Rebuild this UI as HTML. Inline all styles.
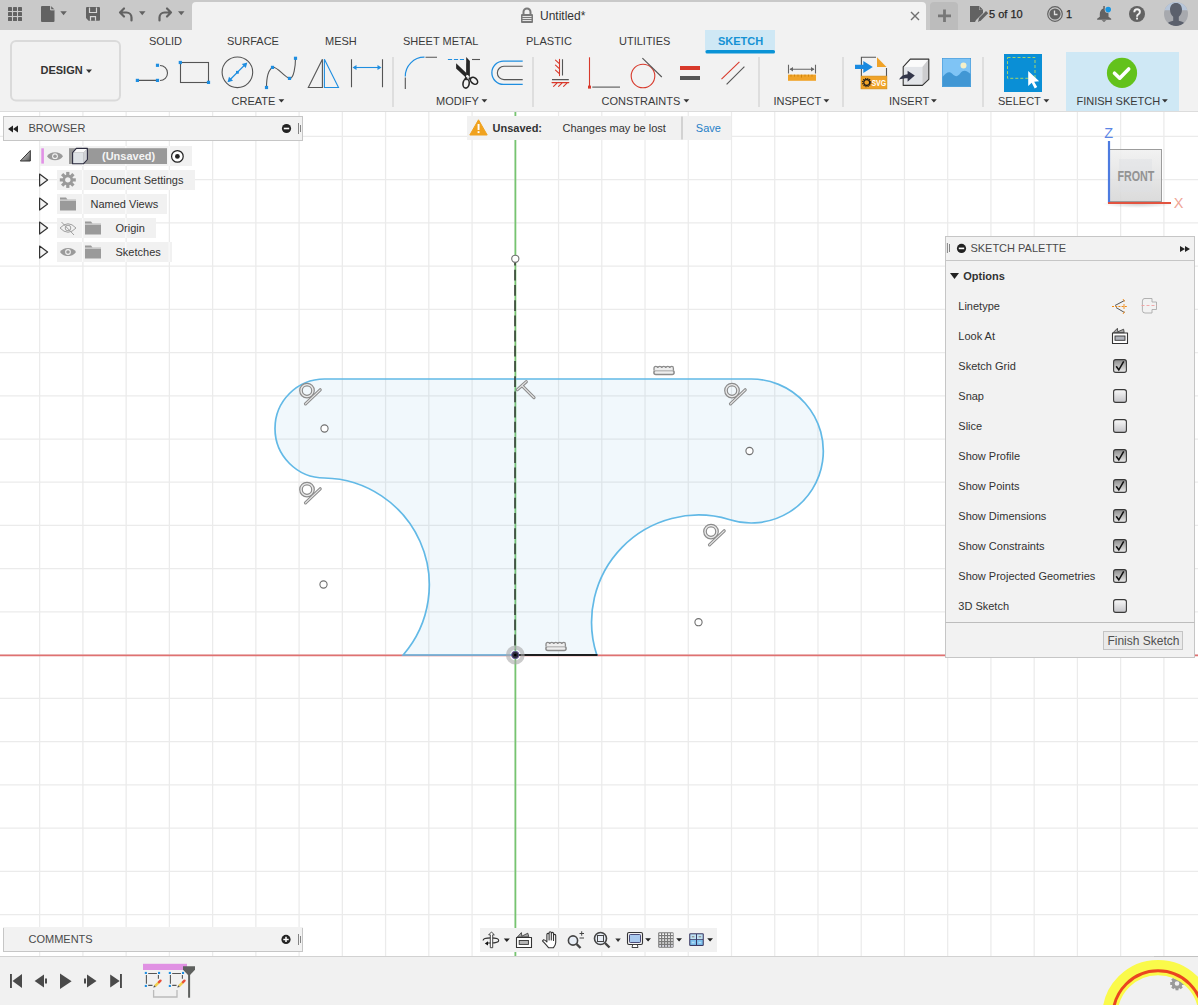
<!DOCTYPE html>
<html><head><meta charset="utf-8"><title>Fusion Sketch</title>
<style>html,body{margin:0;padding:0;width:1198px;height:1005px;overflow:hidden;background:#fff}svg{display:block}</style></head>
<body><svg width="1198" height="1005" viewBox="0 0 1198 1005">
<rect x="0" y="112" width="1198" height="844" fill="#ffffff"/>
<path d="M39.66 112V956 M82.90 112V956 M126.14 112V956 M169.38 112V956 M212.62 112V956 M255.86 112V956 M299.10 112V956 M342.34 112V956 M385.58 112V956 M428.82 112V956 M472.06 112V956 M515.30 112V956 M558.54 112V956 M601.78 112V956 M645.02 112V956 M688.26 112V956 M731.50 112V956 M774.74 112V956 M817.98 112V956 M861.22 112V956 M904.46 112V956 M947.70 112V956 M990.94 112V956 M1034.18 112V956 M1077.42 112V956 M1120.66 112V956 M1163.90 112V956 M0 136.32H1198 M0 179.56H1198 M0 222.80H1198 M0 266.04H1198 M0 309.28H1198 M0 352.52H1198 M0 395.76H1198 M0 439.00H1198 M0 482.24H1198 M0 525.48H1198 M0 568.72H1198 M0 611.96H1198 M0 655.20H1198 M0 698.44H1198 M0 741.68H1198 M0 784.92H1198 M0 828.16H1198 M0 871.40H1198 M0 914.64H1198" stroke="#ebebeb" stroke-width="1.25" fill="none"/>
<path d="M0 655.3H1198" stroke="#df7171" stroke-width="1.7"/>
<path d="M515.4 112V956" stroke="#76c470" stroke-width="1.8"/>
<path d="M324.5 379 H749.5 A72 72 0 1 1 729.08 519.46 A107 107 0 0 0 596.8 655 H403.2 A107 107 0 0 0 324.5 478 A49.5 49.5 0 0 1 324.5 379 Z" fill="#5ab2dc" fill-opacity="0.085" stroke="none"/>
<path d="M324.5 379 H749.5 A72 72 0 1 1 729.08 519.46 A107 107 0 0 0 596.8 655 H403.2 A107 107 0 0 0 324.5 478 A49.5 49.5 0 0 1 324.5 379 Z" fill="none" stroke="#62b9e6" stroke-width="1.7"/>
<path d="M515 655H597.5" stroke="#1e1e1e" stroke-width="2.2"/>
<path d="M515 262.5V650" stroke="#2a2a2a" stroke-opacity="0.72" stroke-width="1.9" stroke-dasharray="10.8 4.4" stroke-dashoffset="7.9"/>
<circle cx="515.3" cy="258.8" r="3.6" fill="#ffffff" stroke="#707070" stroke-width="1.1"/>
<circle cx="324.5" cy="428.5" r="3.6" fill="#ffffff" stroke="#707070" stroke-width="1.1"/>
<circle cx="323.5" cy="584.5" r="3.6" fill="#ffffff" stroke="#707070" stroke-width="1.1"/>
<circle cx="749.5" cy="451" r="3.6" fill="#ffffff" stroke="#707070" stroke-width="1.1"/>
<circle cx="698.5" cy="622.2" r="3.6" fill="#ffffff" stroke="#707070" stroke-width="1.1"/>
<circle cx="515.3" cy="655" r="7.4" fill="none" stroke="#a8a8a8" stroke-opacity="0.6" stroke-width="4"/>
<circle cx="515.3" cy="655" r="3.7" fill="#2b2b3a" stroke="#6d60a0" stroke-width="0.9"/>
<circle cx="515.3" cy="655" r="1.3" fill="#000"/>
<g transform="translate(299,383)" fill="none" stroke-linecap="round"><circle cx="8" cy="7.6" r="6" stroke="#8c8c8c" stroke-width="3.8"/><circle cx="8" cy="7.6" r="6" stroke="#e9e9e9" stroke-width="1.4"/><path d="M6.5 20.8L21.2 6.8" stroke="#8c8c8c" stroke-width="3.2"/><path d="M6.5 20.8L21.2 6.8" stroke="#e9e9e9" stroke-width="1.1"/></g>
<g transform="translate(299,482)" fill="none" stroke-linecap="round"><circle cx="8" cy="7.6" r="6" stroke="#8c8c8c" stroke-width="3.8"/><circle cx="8" cy="7.6" r="6" stroke="#e9e9e9" stroke-width="1.4"/><path d="M6.5 20.8L21.2 6.8" stroke="#8c8c8c" stroke-width="3.2"/><path d="M6.5 20.8L21.2 6.8" stroke="#e9e9e9" stroke-width="1.1"/></g>
<g transform="translate(724,383)" fill="none" stroke-linecap="round"><circle cx="8" cy="7.6" r="6" stroke="#8c8c8c" stroke-width="3.8"/><circle cx="8" cy="7.6" r="6" stroke="#e9e9e9" stroke-width="1.4"/><path d="M6.5 20.8L21.2 6.8" stroke="#8c8c8c" stroke-width="3.2"/><path d="M6.5 20.8L21.2 6.8" stroke="#e9e9e9" stroke-width="1.1"/></g>
<g transform="translate(703,524)" fill="none" stroke-linecap="round"><circle cx="8" cy="7.6" r="6" stroke="#8c8c8c" stroke-width="3.8"/><circle cx="8" cy="7.6" r="6" stroke="#e9e9e9" stroke-width="1.4"/><path d="M6.5 20.8L21.2 6.8" stroke="#8c8c8c" stroke-width="3.2"/><path d="M6.5 20.8L21.2 6.8" stroke="#e9e9e9" stroke-width="1.1"/></g>
<g fill="none" stroke-linecap="round"><path d="M517.4 389.6L526.3 381.7M522 385.6L534 397.6" stroke="#8c8c8c" stroke-width="3.2"/><path d="M517.4 389.6L526.3 381.7M522 385.6L534 397.6" stroke="#e9e9e9" stroke-width="1.1"/></g>
<g transform="translate(653,365)" fill="none"><rect x="0.9" y="5.4" width="20.2" height="4.2" rx="2" stroke="#8c8c8c" stroke-width="1.5" fill="#eeeeee"/><path d="M1 5.4V3.2q0-1.8 1.8-1.8q1.8 0 2 1.6q0.2-1.6 2-1.6q1.8 0 2 1.6q0.2-1.6 2-1.6q1.8 0 2 1.6q0.2-1.6 2-1.6q1.8 0 2 1.6q0.2-1.6 2-1.6q1.6 0 1.6 1.8V5.4" stroke="#8c8c8c" stroke-width="1.3" fill="#eeeeee"/></g>
<g transform="translate(545,641)" fill="none"><rect x="0.9" y="5.4" width="20.2" height="4.2" rx="2" stroke="#8c8c8c" stroke-width="1.5" fill="#eeeeee"/><path d="M1 5.4V3.2q0-1.8 1.8-1.8q1.8 0 2 1.6q0.2-1.6 2-1.6q1.8 0 2 1.6q0.2-1.6 2-1.6q1.8 0 2 1.6q0.2-1.6 2-1.6q1.8 0 2 1.6q0.2-1.6 2-1.6q1.6 0 1.6 1.8V5.4" stroke="#8c8c8c" stroke-width="1.3" fill="#eeeeee"/></g>
<defs><linearGradient id="cubeg" x1="0" y1="0" x2="0" y2="1"><stop offset="0" stop-color="#f0f0f0"/><stop offset="1" stop-color="#d6d6d6"/></linearGradient><radialGradient id="shad" cx="0.5" cy="0.5" r="0.5"><stop offset="0" stop-color="#000" stop-opacity="0.18"/><stop offset="1" stop-color="#000" stop-opacity="0"/></radialGradient></defs>
<ellipse cx="1138" cy="204" rx="36" ry="4" fill="url(#shad)"/>
<rect x="1109.5" y="149.5" width="52" height="52" fill="url(#cubeg)" fill-opacity="0.88" stroke="#9c9c9c" stroke-width="1"/><rect x="1119" y="159" width="33" height="33" fill="#dde0e4" fill-opacity="0.45"/>
<text x="1117.4" y="181" font-family="Liberation Sans, sans-serif" font-size="14.5" font-weight="bold" fill="#939393" textLength="37" lengthAdjust="spacingAndGlyphs">FRONT</text>
<path d="M1109 141V203" stroke="#4d7be0" stroke-width="2.2"/>
<path d="M1108 203H1171" stroke="#e2533f" stroke-width="2.2"/>
<text x="1108.6" y="138" text-anchor="middle" font-family="Liberation Sans, sans-serif" font-size="14.5" fill="#5b86e6">Z</text>
<text x="1178.5" y="208" text-anchor="middle" font-family="Liberation Sans, sans-serif" font-size="14.5" fill="#efa595">X</text>
<rect x="0" y="0" width="1198" height="30" fill="#c9c9c9"/>
<path d="M192 30V6a4 4 0 0 1 4-4H922a4 4 0 0 1 4 4V30Z" fill="#f2f2f2"/>
<path d="M930 30V6a4 4 0 0 1 4-4H954a4 4 0 0 1 4 4V30Z" fill="#bcbcbc"/>
<rect x="8" y="7" width="4" height="4" rx="0.6" fill="#626262"/>
<rect x="8" y="12" width="4" height="4" rx="0.6" fill="#626262"/>
<rect x="8" y="17" width="4" height="4" rx="0.6" fill="#626262"/>
<rect x="13" y="7" width="4" height="4" rx="0.6" fill="#626262"/>
<rect x="13" y="12" width="4" height="4" rx="0.6" fill="#626262"/>
<rect x="13" y="17" width="4" height="4" rx="0.6" fill="#626262"/>
<rect x="18" y="7" width="4" height="4" rx="0.6" fill="#626262"/>
<rect x="18" y="12" width="4" height="4" rx="0.6" fill="#626262"/>
<rect x="18" y="17" width="4" height="4" rx="0.6" fill="#626262"/>
<path d="M41 7a1 1 0 0 1 1-1h8.5l4 4V21a1 1 0 0 1-1 1H42a1 1 0 0 1-1-1Z" fill="#626262"/><path d="M50.5 6v4h4" fill="#c9c9c9" stroke="#c9c9c9" stroke-width="0.8"/><path d="M51.2 6.3l3 3h-3z" fill="#626262"/>
<path d="M60.3 11.3h6.5l-3.25 4z" fill="#626262"/>
<path d="M86 8a1 1 0 0 1 1-1H99a1 1 0 0 1 1 1V19.8a1 1 0 0 1-1 1H88.6L86 18Z" fill="#626262"/><path d="M89.5 7.6V12.5H96.5V7.6M90.5 20.8V16.6H95.5V20.8" fill="none" stroke="#d6d6d6" stroke-width="1.2"/>
<path d="M131.5 20.5v-3a5 5 0 0 0-5-5h-6.5M124 8.5l-4 4 4 4" fill="none" stroke="#626262" stroke-width="2.2" stroke-linecap="round" stroke-linejoin="round"/>
<path d="M139 11.3h6.5l-3.25 4z" fill="#626262"/>
<path d="M159.5 20.5v-3a5 5 0 0 1 5-5h6.5M167 8.5l4 4-4 4" fill="none" stroke="#626262" stroke-width="2.2" stroke-linecap="round" stroke-linejoin="round"/>
<path d="M178 11.3h6.5l-3.25 4z" fill="#626262"/>
<path d="M523.5 14v-2a3.5 3.5 0 0 1 7 0v2" fill="none" stroke="#7a7a7a" stroke-width="2"/><rect x="521" y="14" width="12" height="9" rx="1" fill="#7a7a7a"/><path d="M522.5 16.5h9M522.5 18.5h9M522.5 20.5h9" stroke="#f2f2f2" stroke-width="0.9"/>
<text x="540" y="20" font-family="Liberation Sans, sans-serif" font-size="12" fill="#333">Untitled*</text>
<path d="M911 12l8 8M919 12l-8 8" stroke="#707070" stroke-width="1.4"/>
<path d="M944.5 9.5v12.5M938 15.8h13" stroke="#777" stroke-width="2.8"/>
<path d="M970 6h9l4 4v3l-7 7-1 2h-5Z" fill="#626262"/><path d="M978 22l1-4 7-7 2.2 2.2-7 7z" fill="#626262"/><path d="M979 6v4h4" fill="#c9c9c9"/><path d="M979.5 6.2l3.5 3.6h-3.5z" fill="#626262"/>
<text x="989" y="17.8" font-family="Liberation Sans, sans-serif" font-size="11" fill="#262626" stroke="#262626" stroke-width="0.25">5 of 10</text>
<circle cx="1055" cy="14" r="7.3" fill="none" stroke="#626262" stroke-width="1.2"/><circle cx="1055" cy="14" r="5.6" fill="#626262"/><path d="M1054.5 10.5v4h3" fill="none" stroke="#e0e0e0" stroke-width="1.3"/>
<text x="1066" y="17.8" font-family="Liberation Sans, sans-serif" font-size="11" fill="#262626" stroke="#262626" stroke-width="0.25">1</text>
<path d="M1103.3 6h1.5v2.4c2.4 0.8 3.7 3 3.7 5.6v2.8l2.7 2v0.9H1097.1v-0.9l2.7-2V14c0-2.6 1.3-4.8 3.5-5.6z" fill="#626262"/><path d="M1101.6 20.3h4.8l-2.4 1.8z" fill="#626262"/><circle cx="1108.2" cy="9.6" r="3.5" fill="#cccccc"/><circle cx="1108.2" cy="9.6" r="2.8" fill="#1895e0"/>
<circle cx="1137" cy="14" r="8" fill="#626262"/><path d="M1134.3 12.2c0-1.9 1.2-3 2.8-3s2.8 1.1 2.8 2.7c0 1.6-1.3 2.2-2.1 2.8-0.5 0.4-0.7 0.8-0.7 1.5v0.6" fill="none" stroke="#f0f0f0" stroke-width="1.9"/><rect x="1136.1" y="17.6" width="1.9" height="1.9" fill="#f0f0f0"/>
<defs><clipPath id="av"><circle cx="1176" cy="14" r="12"/></clipPath></defs><g clip-path="url(#av)"><rect x="1164" y="2" width="24" height="24" fill="#a7a9ae"/><rect x="1164" y="2" width="24" height="8.2" fill="#b7c6da"/><path d="M1176 3c3.6 0 6 2.6 6 6.6 0 3.6-1.6 6-3.2 7.2V20.8c2.4 0.6 4.6 1.4 5.8 2.6L1176 27l-8.6-3.6c1.2-1.2 3.4-2 5.8-2.6V16.8c-1.6-1.2-3.2-3.6-3.2-7.2 0-4 2.4-6.6 6-6.6z" fill="#5b606c"/></g>
<rect x="0" y="30" width="1198" height="81" fill="#f2f2f2"/>
<rect x="0" y="111" width="1198" height="1" fill="#dcdcdc"/>
<rect x="11" y="41" width="109" height="59.5" rx="5" fill="none" stroke="#dadada" stroke-width="2"/>
<text x="40.5" y="74.3" font-family="Liberation Sans, sans-serif" font-size="11" font-weight="bold" fill="#333">DESIGN</text>
<path d="M86 69.5h6l-3.0 3.5z" fill="#333"/>
<text x="149" y="45.2" font-family="Liberation Sans, sans-serif" font-size="11" fill="#3a3a3a">SOLID</text>
<text x="227" y="45.2" font-family="Liberation Sans, sans-serif" font-size="11" fill="#3a3a3a">SURFACE</text>
<text x="325" y="45.2" font-family="Liberation Sans, sans-serif" font-size="11" fill="#3a3a3a">MESH</text>
<text x="403" y="45.2" font-family="Liberation Sans, sans-serif" font-size="11" fill="#3a3a3a">SHEET METAL</text>
<text x="526" y="45.2" font-family="Liberation Sans, sans-serif" font-size="11" fill="#3a3a3a">PLASTIC</text>
<text x="619" y="45.2" font-family="Liberation Sans, sans-serif" font-size="11" fill="#3a3a3a">UTILITIES</text>
<rect x="705" y="30" width="70" height="22" fill="#cfe8f5"/><rect x="705.5" y="50" width="69.5" height="3.5" rx="1.6" fill="#0a93d6"/>
<text x="718" y="45.2" font-family="Liberation Sans, sans-serif" font-size="11" font-weight="bold" fill="#1492d4">SKETCH</text>
<rect x="1066" y="52" width="113" height="59" fill="#cfe8f5"/>
<text x="231.5" y="105" font-family="Liberation Sans, sans-serif" font-size="11" fill="#3a3a3a">CREATE</text>
<path d="M278.5 99.2h5.8l-2.9 3.4z" fill="#333"/>
<text x="436" y="105" font-family="Liberation Sans, sans-serif" font-size="11" fill="#3a3a3a">MODIFY</text>
<path d="M481.5 99.2h5.8l-2.9 3.4z" fill="#333"/>
<text x="601.5" y="105" font-family="Liberation Sans, sans-serif" font-size="11" fill="#3a3a3a">CONSTRAINTS</text>
<path d="M683.5 99.2h5.8l-2.9 3.4z" fill="#333"/>
<text x="773.5" y="105" font-family="Liberation Sans, sans-serif" font-size="11" fill="#3a3a3a">INSPECT</text>
<path d="M823.5 99.2h5.8l-2.9 3.4z" fill="#333"/>
<text x="889" y="105" font-family="Liberation Sans, sans-serif" font-size="11" fill="#3a3a3a">INSERT</text>
<path d="M931 99.2h5.8l-2.9 3.4z" fill="#333"/>
<text x="998" y="105" font-family="Liberation Sans, sans-serif" font-size="11" fill="#3a3a3a">SELECT</text>
<path d="M1043.5 99.2h5.8l-2.9 3.4z" fill="#333"/>
<text x="1076.5" y="105" font-family="Liberation Sans, sans-serif" font-size="11" fill="#3a3a3a">FINISH SKETCH</text>
<path d="M1162 99.2h5.8l-2.9 3.4z" fill="#333"/>
<rect x="392" y="57" width="2" height="50" fill="#dedede"/>
<rect x="532" y="57" width="2" height="50" fill="#dedede"/>
<rect x="758" y="57" width="2" height="50" fill="#dedede"/>
<rect x="842" y="57" width="2" height="50" fill="#dedede"/>
<rect x="982" y="57" width="2" height="50" fill="#dedede"/>
<path d="M138 80.4H157.5M160 65.5a7.5 7.5 0 0 1 0 15" fill="none" stroke="#555" stroke-width="1.1"/><rect x="135.8" y="78.80000000000001" width="3.2" height="3.2" fill="#1f8ee0"/><rect x="155.9" y="78.80000000000001" width="3.2" height="3.2" fill="#1f8ee0"/><rect x="155.9" y="63.699999999999996" width="3.2" height="3.2" fill="#1f8ee0"/>
<rect x="180.5" y="62.5" width="28" height="20" fill="none" stroke="#555" stroke-width="1.1"/><rect x="178.70000000000002" y="60.9" width="3.2" height="3.2" fill="#1f8ee0"/><rect x="206.9" y="80.80000000000001" width="3.2" height="3.2" fill="#1f8ee0"/>
<circle cx="237.4" cy="72.3" r="15.3" fill="none" stroke="#555" stroke-width="1.1"/><path d="M228.5 81.2L246.3 63.4" stroke="#1f8ee0" stroke-width="1.3"/><path d="M227.5 82.2l1.5-5.5 4 4z M247.3 62.4l-5.5 1.5 4 4z" fill="#1f8ee0"/><rect x="236.0" y="70.89999999999999" width="2.8" height="2.8" fill="#1f8ee0"/>
<path d="M266.5 87.5C266.5 78 268 70 272.5 67.4C277 66 284 77 289.5 78.4C294 79 295.5 65 295.5 58.3" fill="none" stroke="#555" stroke-width="1.1"/><rect x="264.9" y="85.9" width="3.2" height="3.2" fill="#1f8ee0"/><rect x="270.9" y="65.80000000000001" width="3.2" height="3.2" fill="#1f8ee0"/><rect x="287.9" y="76.80000000000001" width="3.2" height="3.2" fill="#1f8ee0"/><rect x="293.9" y="56.699999999999996" width="3.2" height="3.2" fill="#1f8ee0"/>
<path d="M308.3 87.5L322.4 59.3V87.5Z" fill="none" stroke="#555" stroke-width="1.1"/><path d="M324.4 87.5V59.3L338.5 87.5Z" fill="none" stroke="#1f8ee0" stroke-width="1.1"/>
<path d="M351.5 59.3V87.3M382.5 59.3V87.3" stroke="#555" stroke-width="1.1"/><path d="M354 67.5H380" stroke="#1f8ee0" stroke-width="1.1"/><path d="M352.5 67.5l4-2.6v5.2z M381.5 67.5l-4-2.6v5.2z" fill="#1f8ee0"/>
<path d="M405.3 76.5A19 19 0 0 1 424.5 57.2" fill="none" stroke="#1f8ee0" stroke-width="1.2"/><path d="M425.5 57.2H437M405.3 77.5V89" stroke="#555" stroke-width="1.1"/>
<path d="M447.9 59.5H464" stroke="#1f8ee0" stroke-width="1.1" stroke-dasharray="4.2 1.8"/><path d="M472 59.5H480" stroke="#555" stroke-width="1.1"/><path d="M466.2 57L469.9 61L469.9 77L466.1 74.5Z" fill="#262626"/><path d="M456.1 63.3L466.6 73.2L466.6 78.2L456.1 68.6Z" fill="#262626"/><path d="M466.5 77L465.2 80M469.2 77.5L470.5 79.5" stroke="#262626" stroke-width="2.2"/><ellipse cx="466.1" cy="83.5" rx="3.1" ry="4.6" transform="rotate(8 466.1 83.5)" fill="none" stroke="#262626" stroke-width="1.6"/><ellipse cx="474" cy="80.8" rx="4.1" ry="2.9" transform="rotate(42 474 80.8)" fill="none" stroke="#262626" stroke-width="1.6"/><circle cx="467.4" cy="76.3" r="1.2" fill="#f2f2f2"/>
<path d="M522.7 61.1H503.5a11.65 11.65 0 0 0 0 23.3H522.7" fill="none" stroke="#1f8ee0" stroke-width="1.3"/><path d="M522.7 66.3H504a6.65 6.65 0 0 0 0 13.3H522.7" fill="none" stroke="#555" stroke-width="1.1"/>
<path d="M562.5 59.2V75.6M552 79.6H568.8" stroke="#555" stroke-width="1.1"/><path d="M559.5 59.2V75.6M555.5 60.2l3.8 3.5M555.5 65.2l3.8 3.5M555.5 70.2l3.8 3.5M552 82.6H568.8M557.2 82.8l-3.6 3.6M562.2 82.8l-3.6 3.6M567.2 82.8l-3.6 3.6" stroke="#d8392b" stroke-width="1.1" stroke-linecap="round"/>
<path d="M589.5 57.3V86" stroke="#d8392b" stroke-width="1.1"/><rect x="588" y="85.6" width="3" height="3" fill="#d8392b"/><path d="M592.3 87.1H620" stroke="#555" stroke-width="1.1"/>
<circle cx="643" cy="76" r="11.8" fill="none" stroke="#d8392b" stroke-width="1.1"/><path d="M642.4 58.2L661.8 77" stroke="#555" stroke-width="1.1"/>
<rect x="680" y="66" width="20" height="4" fill="#d8392b"/><rect x="680" y="76" width="20" height="4" fill="#555"/>
<path d="M721.5 79.2L739.4 61.8" stroke="#d8392b" stroke-width="1.1"/><path d="M726.6 84.3L744.4 66.6" stroke="#555" stroke-width="1.1"/>
<path d="M788.5 64.7V73.6M815.5 64.7V73.6M790 69.3H814" stroke="#666" stroke-width="1.1"/><path d="M789.5 69.3l3.5-2.2v4.4z M814.5 69.3l-3.5-2.2v4.4z" fill="#666"/><rect x="788" y="74.6" width="28" height="6.2" fill="#f0a328"/><path d="M791 74.6v2M794.5 74.6v2M798 74.6v2M801.5 74.6v3M805 74.6v2M808.5 74.6v2M812 74.6v2" stroke="#c07800" stroke-width="0.7"/>
<path d="M861.4 76.1V57.3H876M886.5 68V76.1" fill="none" stroke="#555" stroke-width="1.1"/><path d="M877 57.3V66.9H886.5Z" fill="#f0a328"/><rect x="861" y="76.1" width="25.9" height="12.8" fill="#f0a328" stroke="#d08a10" stroke-width="0.6"/><text x="871.4" y="85.8" font-family="Liberation Sans, sans-serif" font-size="9.2" font-weight="bold" fill="#fff" textLength="14.8" lengthAdjust="spacingAndGlyphs">SVG</text><circle cx="866.7" cy="82.5" r="2.9" fill="#f0a328" stroke="#1a1a1a" stroke-width="1.1"/><circle cx="866.7" cy="82.5" r="4" fill="none" stroke="#1a1a1a" stroke-width="1.3" stroke-dasharray="1.1 1"/><path d="M855 64.8h8.3v-3.9l9.5 6-9.5 6v-3.9H855z" fill="#1a8ae0"/>
<path d="M903.2 66.9L910.3 59.1H928.8L922.4 66.9Z" fill="#fbfbfb"/><path d="M903.2 66.9H922.4V85.4H903.2Z" fill="#e3e5e9"/><path d="M922.4 66.9L928.8 59.1V79.3L922.4 85.4Z" fill="#cdcdcf"/><path d="M903.2 85.4V66.9L910.3 59.1H928.8V79.3L922.4 85.4Z" fill="none" stroke="#333" stroke-width="1.1" stroke-linejoin="round"/><path d="M899 79.5c2-3.5 5-5 8.6-5.2V70.8l7.2 4.6-7.2 6.4v-3.6c-3.4 0-6 0.6-8.6 1.3z" fill="#33364a"/>
<rect x="942" y="58" width="29" height="29" fill="#3d90d0"/><rect x="942.5" y="58.5" width="28" height="28" fill="#7fc4f5"/><path d="M942.5 77c4-5 7-6 10-3s5 3 8-1 7-2 10 1v12.5h-28z" fill="#4197d4"/><circle cx="963.5" cy="65.5" r="3" fill="#f4efc8"/>
<rect x="1004" y="54" width="38" height="38" fill="#0a8fd6"/><rect x="1007.5" y="57.5" width="27.5" height="20.8" fill="none" stroke="#a4d468" stroke-width="1" stroke-dasharray="3 2"/><path d="M1028.2 71.1V86l3.5-3.2 3 5.6 2.5-1.3-3-5.4 5-0.5z" fill="#fff"/>
<circle cx="1122" cy="72.9" r="15.1" fill="#63c21b"/><path d="M1114.5 73.2l5.2 5 9-9.2" fill="none" stroke="#fff" stroke-width="3.6" stroke-linecap="round" stroke-linejoin="round"/>
<rect x="3.5" y="116.5" width="299" height="24" fill="#f2f2f2" stroke="#c6c6c6" stroke-width="1"/>
<path d="M8 129l5-3.5v7z M13 129l5-3.5v7z" fill="#222"/>
<text x="28.5" y="132" font-family="Liberation Sans, sans-serif" font-size="11" fill="#4a4a4a">BROWSER</text>
<circle cx="286.5" cy="128.5" r="4.6" fill="#222"/><rect x="283.8" y="127.7" width="5.4" height="1.6" fill="#fff"/>
<path d="M298.5 123V134M300.5 125V132" stroke="#777" stroke-width="0.9"/>
<rect x="40" y="146" width="152" height="20" fill="#f1f1f1"/>
<rect x="57" y="170" width="138" height="20" fill="#f1f1f1"/>
<rect x="57" y="194" width="110" height="20" fill="#f1f1f1"/>
<rect x="57" y="218" width="99" height="20" fill="#f1f1f1"/>
<rect x="57" y="242" width="115" height="20" fill="#f1f1f1"/>
<path d="M82.6 146V166M125.8 146V166M169.1 146V166M82.6 170V190M125.8 170V190M169.1 170V190M82.6 194V214M125.8 194V214M82.6 218V238M125.8 218V238M82.6 242V262M125.8 242V262M169.1 242V262" stroke="#fafafa" stroke-width="1.25"/>
<defs><linearGradient id="tri" x1="0" y1="0" x2="1" y2="1"><stop offset="0" stop-color="#eee"/><stop offset="1" stop-color="#555"/></linearGradient></defs>
<path d="M20.3 161L30.3 150.5V161Z" fill="url(#tri)" stroke="#333" stroke-width="1"/>
<rect x="41.3" y="148.3" width="2.6" height="15.3" fill="#e191e6"/>
<path d="M47 156.2C50 150.79999999999998 60 150.79999999999998 63 156.2C60 161.6 50 161.6 47 156.2Z" fill="#9a9a9a"/><circle cx="55" cy="156.2" r="2.9" fill="#f0f0f0"/><circle cx="55" cy="156.2" r="1.8" fill="#9a9a9a"/>
<rect x="69" y="148.2" width="98" height="15.8" fill="#999"/>
<path d="M72.6 152.6L76.4 148.4H87.4L83.6 152.6Z" fill="#fafafa"/><path d="M72.6 152.6H83.6V163.7H72.6Z" fill="#dfe3e7"/><path d="M83.6 152.6L87.4 148.4V159.5L83.6 163.7Z" fill="#d0d2d6"/><path d="M72.6 152.6L76.4 148.4H87.4V159.5L83.6 163.7H72.6Z" fill="none" stroke="#2d2d40" stroke-width="1.1" stroke-linejoin="round"/>
<text x="102" y="160.3" font-family="Liberation Sans, sans-serif" font-size="11" font-weight="bold" fill="#f4f4f4">(Unsaved)</text>
<circle cx="177.4" cy="156.4" r="5.8" fill="#fff" stroke="#222" stroke-width="1.2"/><circle cx="177.4" cy="156.4" r="2.4" fill="#222"/>
<path d="M39.6 174L47.6 180L39.6 186Z" fill="#f4f4f4" stroke="#333" stroke-width="1.2" stroke-linejoin="round"/>
<g transform="translate(67.8,179.9)"><circle r="4" fill="none" stroke="#9a9a9a" stroke-width="2.6"/><rect x="-1.6" y="-8" width="3.2" height="4.2" fill="#9a9a9a" transform="rotate(0)"/><rect x="-1.6" y="-8" width="3.2" height="4.2" fill="#9a9a9a" transform="rotate(45)"/><rect x="-1.6" y="-8" width="3.2" height="4.2" fill="#9a9a9a" transform="rotate(90)"/><rect x="-1.6" y="-8" width="3.2" height="4.2" fill="#9a9a9a" transform="rotate(135)"/><rect x="-1.6" y="-8" width="3.2" height="4.2" fill="#9a9a9a" transform="rotate(180)"/><rect x="-1.6" y="-8" width="3.2" height="4.2" fill="#9a9a9a" transform="rotate(225)"/><rect x="-1.6" y="-8" width="3.2" height="4.2" fill="#9a9a9a" transform="rotate(270)"/><rect x="-1.6" y="-8" width="3.2" height="4.2" fill="#9a9a9a" transform="rotate(315)"/></g>
<text x="90.5" y="184" font-family="Liberation Sans, sans-serif" font-size="11" fill="#333">Document Settings</text>
<path d="M39.6 198L47.6 204L39.6 210Z" fill="#f4f4f4" stroke="#333" stroke-width="1.2" stroke-linejoin="round"/>
<path d="M60 197.5h6l1.5 2H76v11H60z" fill="#9a9a9a"/><path d="M60 200.1H76" stroke="#f0f0f0" stroke-width="0.9"/>
<text x="90.5" y="208" font-family="Liberation Sans, sans-serif" font-size="11" fill="#333">Named Views</text>
<path d="M39.6 222L47.6 228L39.6 234Z" fill="#f4f4f4" stroke="#333" stroke-width="1.2" stroke-linejoin="round"/>
<path d="M60 228q8-8.5 16 0q-8 8.5-16 0z" fill="none" stroke="#a0a0a0" stroke-width="1"/><circle cx="68" cy="228" r="2.8" fill="none" stroke="#a0a0a0" stroke-width="1"/><path d="M61.5 222L74 235" stroke="#a0a0a0" stroke-width="1"/>
<path d="M85 221.5h6l1.5 2H101v11H85z" fill="#9a9a9a"/><path d="M85 224.1H101" stroke="#f0f0f0" stroke-width="0.9"/>
<text x="115.5" y="232" font-family="Liberation Sans, sans-serif" font-size="11" fill="#333">Origin</text>
<path d="M39.6 246L47.6 252L39.6 258Z" fill="#f4f4f4" stroke="#333" stroke-width="1.2" stroke-linejoin="round"/>
<path d="M60 252C63 246.6 73 246.6 76 252C73 257.4 63 257.4 60 252Z" fill="#9a9a9a"/><circle cx="68" cy="252" r="2.9" fill="#f0f0f0"/><circle cx="68" cy="252" r="1.8" fill="#9a9a9a"/>
<path d="M85 245.5h6l1.5 2H101v11H85z" fill="#9a9a9a"/><path d="M85 248.1H101" stroke="#f0f0f0" stroke-width="0.9"/>
<text x="115.5" y="256" font-family="Liberation Sans, sans-serif" font-size="11" fill="#333">Sketches</text>
<rect x="467" y="116" width="264" height="24" fill="#f1f1f1"/>
<path d="M478.5 119.8L487.2 135H469.8Z" fill="#f0a21e" stroke="#f0a21e" stroke-width="1" stroke-linejoin="round"/><rect x="477.6" y="124" width="1.9" height="6" fill="#fff"/><rect x="477.6" y="131.2" width="1.9" height="1.9" fill="#fff"/>
<text x="492.5" y="132" font-family="Liberation Sans, sans-serif" font-size="11" font-weight="bold" fill="#333">Unsaved:</text>
<text x="562.5" y="132" font-family="Liberation Sans, sans-serif" font-size="11" fill="#333">Changes may be lost</text>
<rect x="681" y="116.5" width="2" height="23" fill="#d2d2d2"/>
<text x="695.8" y="132" font-family="Liberation Sans, sans-serif" font-size="11" fill="#1f80c8">Save</text>
<rect x="945.5" y="236.5" width="249" height="421" fill="#f2f2f2" stroke="#c6c6c6" stroke-width="1"/>
<path d="M945.5 260.5H1194.5" stroke="#c6c6c6" stroke-width="1"/>
<path d="M947.4 243V253M949.5 244V252" stroke="#777" stroke-width="0.9"/>
<circle cx="961.5" cy="248.4" r="4.6" fill="#222"/><rect x="958.8" y="247.6" width="5.4" height="1.6" fill="#fff"/>
<text x="970.4" y="252" font-family="Liberation Sans, sans-serif" font-size="11" fill="#4a4a4a">SKETCH PALETTE</text>
<path d="M1180 246l5 3-5 3z M1185 246l5 3-5 3z" fill="#222"/>
<path d="M950 273h9l-4.5 6z" fill="#222"/>
<text x="963.3" y="280" font-family="Liberation Sans, sans-serif" font-size="11" font-weight="bold" fill="#333">Options</text>
<defs><linearGradient id="cb" x1="0" y1="0" x2="0" y2="1"><stop offset="0" stop-color="#fafafa"/><stop offset="1" stop-color="#c4c4c8"/></linearGradient><linearGradient id="cbc" x1="0" y1="0" x2="0" y2="1"><stop offset="0" stop-color="#8a8a8a"/><stop offset="1" stop-color="#ececec"/></linearGradient></defs>
<text x="958.3" y="310" font-family="Liberation Sans, sans-serif" font-size="11" fill="#333">Linetype</text>
<text x="958.3" y="340" font-family="Liberation Sans, sans-serif" font-size="11" fill="#333">Look At</text>
<text x="958.3" y="370" font-family="Liberation Sans, sans-serif" font-size="11" fill="#333">Sketch Grid</text>
<rect x="1113.6" y="359.6" width="12.8" height="12.8" rx="2.2" fill="url(#cbc)" stroke="#3a3a3a" stroke-width="1.1"/>
<path d="M1116.2 366.2l2.6 3.6 4.9-8.4" fill="none" stroke="#111" stroke-width="1.5"/>
<text x="958.3" y="400" font-family="Liberation Sans, sans-serif" font-size="11" fill="#333">Snap</text>
<rect x="1113.6" y="389.6" width="12.8" height="12.8" rx="2.2" fill="url(#cb)" stroke="#3a3a3a" stroke-width="1.1"/>
<text x="958.3" y="430" font-family="Liberation Sans, sans-serif" font-size="11" fill="#333">Slice</text>
<rect x="1113.6" y="419.6" width="12.8" height="12.8" rx="2.2" fill="url(#cb)" stroke="#3a3a3a" stroke-width="1.1"/>
<text x="958.3" y="460" font-family="Liberation Sans, sans-serif" font-size="11" fill="#333">Show Profile</text>
<rect x="1113.6" y="449.6" width="12.8" height="12.8" rx="2.2" fill="url(#cbc)" stroke="#3a3a3a" stroke-width="1.1"/>
<path d="M1116.2 456.2l2.6 3.6 4.9-8.4" fill="none" stroke="#111" stroke-width="1.5"/>
<text x="958.3" y="490" font-family="Liberation Sans, sans-serif" font-size="11" fill="#333">Show Points</text>
<rect x="1113.6" y="479.6" width="12.8" height="12.8" rx="2.2" fill="url(#cbc)" stroke="#3a3a3a" stroke-width="1.1"/>
<path d="M1116.2 486.2l2.6 3.6 4.9-8.4" fill="none" stroke="#111" stroke-width="1.5"/>
<text x="958.3" y="520" font-family="Liberation Sans, sans-serif" font-size="11" fill="#333">Show Dimensions</text>
<rect x="1113.6" y="509.6" width="12.8" height="12.8" rx="2.2" fill="url(#cbc)" stroke="#3a3a3a" stroke-width="1.1"/>
<path d="M1116.2 516.2l2.6 3.6 4.9-8.4" fill="none" stroke="#111" stroke-width="1.5"/>
<text x="958.3" y="550" font-family="Liberation Sans, sans-serif" font-size="11" fill="#333">Show Constraints</text>
<rect x="1113.6" y="539.6" width="12.8" height="12.8" rx="2.2" fill="url(#cbc)" stroke="#3a3a3a" stroke-width="1.1"/>
<path d="M1116.2 546.2l2.6 3.6 4.9-8.4" fill="none" stroke="#111" stroke-width="1.5"/>
<text x="958.3" y="580" font-family="Liberation Sans, sans-serif" font-size="11" fill="#333">Show Projected Geometries</text>
<rect x="1113.6" y="569.6" width="12.8" height="12.8" rx="2.2" fill="url(#cbc)" stroke="#3a3a3a" stroke-width="1.1"/>
<path d="M1116.2 576.2l2.6 3.6 4.9-8.4" fill="none" stroke="#111" stroke-width="1.5"/>
<text x="958.3" y="610" font-family="Liberation Sans, sans-serif" font-size="11" fill="#333">3D Sketch</text>
<rect x="1113.6" y="599.6" width="12.8" height="12.8" rx="2.2" fill="url(#cb)" stroke="#3a3a3a" stroke-width="1.1"/>
<path d="M1115 305.5L1124.5 300.5M1116 307.5L1124.5 312.5" stroke="#444" stroke-width="0.9"/><path d="M1112 306.5H1128" stroke="#f08a14" stroke-width="1.1" stroke-dasharray="2 1.2"/><path d="M1124 304V309M1123 299l1.5 2.5M1123 314l1.5-2.5" stroke="#f08a14" stroke-width="0.9"/>
<path d="M1145 298.5h7v3.5h4.5v7.5h-4.5v3.5h-7a2.6 2.6 0 0 1-2.6-2.6V301a2.6 2.6 0 0 1 2.6-2.6z" fill="none" stroke="#aaa" stroke-width="0.9"/><path d="M1141.5 305.5H1157" stroke="#f0a0a0" stroke-width="0.9" stroke-dasharray="3 2"/>
<path d="M1112.5 333h15v10.5h-15z" fill="#fff" stroke="#333" stroke-width="1.1" stroke-linejoin="round"/><rect x="1115" y="336" width="10" height="4.3" fill="#b0b3bb" stroke="#333" stroke-width="0.9"/><path d="M1113.2 332.6L1117.4 328.3L1117.8 331.8L1123.6 329.2L1124.2 332.6Z" fill="#a8a8a8" stroke="#333" stroke-width="0.8" stroke-linejoin="round"/>
<path d="M945.5 622.5H1194.5" stroke="#bdbdbd" stroke-width="1"/>
<rect x="1103.5" y="631.5" width="79" height="18" fill="#eaeaea" stroke="#c4c4c4" stroke-width="1"/>
<text x="1107.4" y="645" font-family="Liberation Sans, sans-serif" font-size="12" fill="#4f4f4f">Finish Sketch</text>
<rect x="3.5" y="927.5" width="299" height="24" fill="#f2f2f2" stroke="#c6c6c6" stroke-width="1"/>
<rect x="3" y="927" width="300" height="1" fill="#f2f2f2"/>
<text x="28.5" y="943" font-family="Liberation Sans, sans-serif" font-size="11" fill="#4a4a4a">COMMENTS</text>
<circle cx="286" cy="939.4" r="4.6" fill="#222"/><path d="M283.3 939.4h5.4M286 936.7v5.4" stroke="#fff" stroke-width="1.5"/>
<path d="M298.5 934V945M300.5 936V943" stroke="#777" stroke-width="0.9"/>
<rect x="480" y="928" width="237" height="24" fill="#f1f1f1"/>
<path d="M498.7 940.4c0-1.4-3.5-2.5-7.8-2.5s-7.8 1.1-7.8 2.5M498.7 940.4c0 1.4-3.5 2.6-7.8 2.6" fill="none" stroke="#333" stroke-width="1.1"/><path d="M490.3 947.7V934.8h-1.6l2.8-2.8 2.8 2.8h-1.6V947.7z" fill="#fff" stroke="#333" stroke-width="0.9" stroke-linejoin="round"/><path d="M490.3 943H487.5" stroke="#333" stroke-width="1.1"/><path d="M484.8 943.4l3.2-2.2v4.4z" fill="#111"/><path d="M503.8 938.5h6l-3.0 3.5z" fill="#222"/>
<path d="M516.5 937.5h15v10h-15z" fill="#fff" stroke="#333" stroke-width="1.1" stroke-linejoin="round"/><rect x="519.2" y="940.5" width="9.2" height="3.9" fill="#b8b8b8" stroke="#333" stroke-width="0.9"/><path d="M517.4 937L521.4 932.6L521.8 936.2L527.8 933.2L528.8 936.8Z" fill="#aaa" stroke="#333" stroke-width="0.8" stroke-linejoin="round"/>
<path d="M548.5 947.7c-2-2.5-4.2-4.8-6-6.8l1.2-1.2c1 0.2 2.2 1.2 3.2 2.2V934.6c0-1.6 2.2-1.6 2.2 0V940v-7c0-1.6 2.2-1.6 2.2 0v7-6.4c0-1.6 2.2-1.6 2.2 0V940.4V935.6c0-1.6 2.2-1.6 2.2 0V942.5c0 2.4-1.2 4-2.2 5.2z" fill="#fff" stroke="#333" stroke-width="1.1" stroke-linejoin="round"/>
<circle cx="573" cy="940.5" r="4.6" fill="#e8eef6" stroke="#444" stroke-width="1.6"/><path d="M576.5 944l4 4" stroke="#444" stroke-width="2.4"/><path d="M579.5 933.5h4.5M581.7 931.3v4.4M579.5 938h4.5" stroke="#444" stroke-width="1"/>
<circle cx="600.5" cy="938.5" r="6" fill="#e8eef6" stroke="#444" stroke-width="1.6"/><rect x="597.5" y="935.5" width="6" height="6" fill="none" stroke="#444" stroke-width="1"/><path d="M605 943l4.5 4.5" stroke="#444" stroke-width="2.4"/><path d="M615.3 938.5h5.5l-2.75 3.5z" fill="#333"/>
<rect x="627.5" y="932.5" width="15" height="12" rx="1.5" fill="#f4f4f4" stroke="#333" stroke-width="1.1"/><rect x="629.5" y="934.5" width="11" height="8" rx="0.8" fill="#a9c9ee" stroke="#3a3a6a" stroke-width="0.9"/><path d="M632 947.5h6l-0.8-3h-4.4z" fill="#fff" stroke="#333" stroke-width="0.9"/><path d="M645.2 938.2h5.8l-2.9 3.4z" fill="#222"/>
<rect x="658.2" y="932.2" width="15.4" height="15.5" rx="1.2" fill="#7a7a7a"/><rect x="659.30" y="933.30" width="1.7" height="1.7" fill="#fff"/><rect x="659.30" y="936.25" width="1.7" height="1.7" fill="#fff"/><rect x="659.30" y="939.20" width="1.7" height="1.7" fill="#eee"/><rect x="659.30" y="942.15" width="1.7" height="1.7" fill="#d8d8d8"/><rect x="659.30" y="945.10" width="1.7" height="1.7" fill="#e8e8f4"/><rect x="662.25" y="933.30" width="1.7" height="1.7" fill="#fff"/><rect x="662.25" y="936.25" width="1.7" height="1.7" fill="#fff"/><rect x="662.25" y="939.20" width="1.7" height="1.7" fill="#eee"/><rect x="662.25" y="942.15" width="1.7" height="1.7" fill="#d8d8d8"/><rect x="662.25" y="945.10" width="1.7" height="1.7" fill="#e8e8f4"/><rect x="665.20" y="933.30" width="1.7" height="1.7" fill="#fff"/><rect x="665.20" y="936.25" width="1.7" height="1.7" fill="#fff"/><rect x="665.20" y="939.20" width="1.7" height="1.7" fill="#eee"/><rect x="665.20" y="942.15" width="1.7" height="1.7" fill="#d8d8d8"/><rect x="665.20" y="945.10" width="1.7" height="1.7" fill="#e8e8f4"/><rect x="668.15" y="933.30" width="1.7" height="1.7" fill="#fff"/><rect x="668.15" y="936.25" width="1.7" height="1.7" fill="#fff"/><rect x="668.15" y="939.20" width="1.7" height="1.7" fill="#eee"/><rect x="668.15" y="942.15" width="1.7" height="1.7" fill="#d8d8d8"/><rect x="668.15" y="945.10" width="1.7" height="1.7" fill="#e8e8f4"/><rect x="671.10" y="933.30" width="1.7" height="1.7" fill="#fff"/><rect x="671.10" y="936.25" width="1.7" height="1.7" fill="#fff"/><rect x="671.10" y="939.20" width="1.7" height="1.7" fill="#eee"/><rect x="671.10" y="942.15" width="1.7" height="1.7" fill="#d8d8d8"/><rect x="671.10" y="945.10" width="1.7" height="1.7" fill="#e8e8f4"/><path d="M676.2 938.2h5.8l-2.9 3.4z" fill="#222"/>
<rect x="689.2" y="933.2" width="14.6" height="12.8" rx="1.3" fill="#3a3a66"/><rect x="690.3" y="934.3" width="5.7" height="4.9" fill="#bfe3f5"/><rect x="697" y="934.3" width="5.7" height="4.9" fill="#bfe3f5"/><rect x="690.3" y="940" width="5.7" height="4.9" fill="#7fc2ee"/><rect x="697" y="940" width="5.7" height="4.9" fill="#7fc2ee"/><rect x="691.8" y="936" width="2.6" height="1.4" fill="#999"/><rect x="698.6" y="936" width="2.6" height="1.4" fill="#999"/><rect x="691.8" y="941.8" width="2.6" height="1.4" fill="#b8dcf4"/><rect x="698.6" y="941.8" width="2.6" height="1.4" fill="#b8dcf4"/><path d="M707.2 938.2h5.8l-2.9 3.4z" fill="#222"/>
<rect x="0" y="956" width="1198" height="49" fill="#f1f1f1"/>
<rect x="0" y="956" width="1198" height="1" fill="#d2d2d2"/><rect x="1154" y="956" width="44" height="1" fill="#c2c2c2"/>
<rect x="10" y="974" width="1.9" height="14" fill="#4a4a4a"/><path d="M22 974v14l-9.5-7z" fill="#4a4a4a"/>
<path d="M44 974.6v13l-9.4-6.5z" fill="#4a4a4a"/><rect x="45" y="978.5" width="2" height="5" fill="#4a4a4a"/>
<path d="M60 973.6v15.4l11.6-7.7z" fill="#4a4a4a"/>
<rect x="84" y="978.5" width="2" height="5" fill="#4a4a4a"/><path d="M87 974.6v13l9.5-6.5z" fill="#4a4a4a"/>
<path d="M110.2 974.6v13l9.5-6.5z" fill="#4a4a4a"/><rect x="120" y="974" width="1.9" height="14" fill="#4a4a4a"/>
<rect x="143" y="963.8" width="44" height="6.2" fill="#e091e3"/>
<path d="M148.20 973.5H156.90M146.40 975V983.7M158.40 975V978.7M148.20 985.4H152.50" stroke="#555" stroke-width="1.1"/><rect x="144.80" y="971.9" width="2.1" height="2.1" fill="#1f8ee0"/><rect x="158.00" y="971.9" width="2.1" height="2.1" fill="#1f8ee0"/><rect x="144.80" y="984.9" width="2.1" height="2.1" fill="#1f8ee0"/><path d="M155.00 986.2L159.30 981.9" stroke="#f1d050" stroke-width="2.6"/><path d="M159.00 982.2L160.50 980.7" stroke="#e8503a" stroke-width="2.4" stroke-linecap="round"/><path d="M153.20 987.6L154.20 985.2L155.90 986.9Z" fill="#555"/>
<path d="M172.20 973.5H180.90M170.40 975V983.7M182.40 975V978.7M172.20 985.4H176.50" stroke="#555" stroke-width="1.1"/><rect x="168.80" y="971.9" width="2.1" height="2.1" fill="#1f8ee0"/><rect x="182.00" y="971.9" width="2.1" height="2.1" fill="#1f8ee0"/><rect x="168.80" y="984.9" width="2.1" height="2.1" fill="#1f8ee0"/><path d="M179.00 986.2L183.30 981.9" stroke="#f1d050" stroke-width="2.6"/><path d="M183.00 982.2L184.50 980.7" stroke="#e8503a" stroke-width="2.4" stroke-linecap="round"/><path d="M177.20 987.6L178.20 985.2L179.90 986.9Z" fill="#555"/>
<path d="M153.6 990v7h23.4v-7" fill="none" stroke="#bbb" stroke-width="1.3"/>
<path d="M183 966.2h12v3.5l-5 5.2h-2l-5-5.2z" fill="#5e605e"/><rect x="188.1" y="973" width="2" height="24.7" fill="#5e605e"/>
<g transform="translate(1177,983.5)"><circle r="3.8" fill="none" stroke="#999" stroke-width="3"/><rect x="-1.5" y="-6.8" width="3" height="3" fill="#999" transform="rotate(0)"/><rect x="-1.5" y="-6.8" width="3" height="3" fill="#999" transform="rotate(45)"/><rect x="-1.5" y="-6.8" width="3" height="3" fill="#999" transform="rotate(90)"/><rect x="-1.5" y="-6.8" width="3" height="3" fill="#999" transform="rotate(135)"/><rect x="-1.5" y="-6.8" width="3" height="3" fill="#999" transform="rotate(180)"/><rect x="-1.5" y="-6.8" width="3" height="3" fill="#999" transform="rotate(225)"/><rect x="-1.5" y="-6.8" width="3" height="3" fill="#999" transform="rotate(270)"/><rect x="-1.5" y="-6.8" width="3" height="3" fill="#999" transform="rotate(315)"/></g>
<circle cx="1158" cy="1015.7" r="48.1" fill="none" stroke="#fafa4a" stroke-width="15.2"/><circle cx="1158" cy="1015.7" r="44.9" fill="none" stroke="#ea4520" stroke-width="3"/>
</svg></body></html>
